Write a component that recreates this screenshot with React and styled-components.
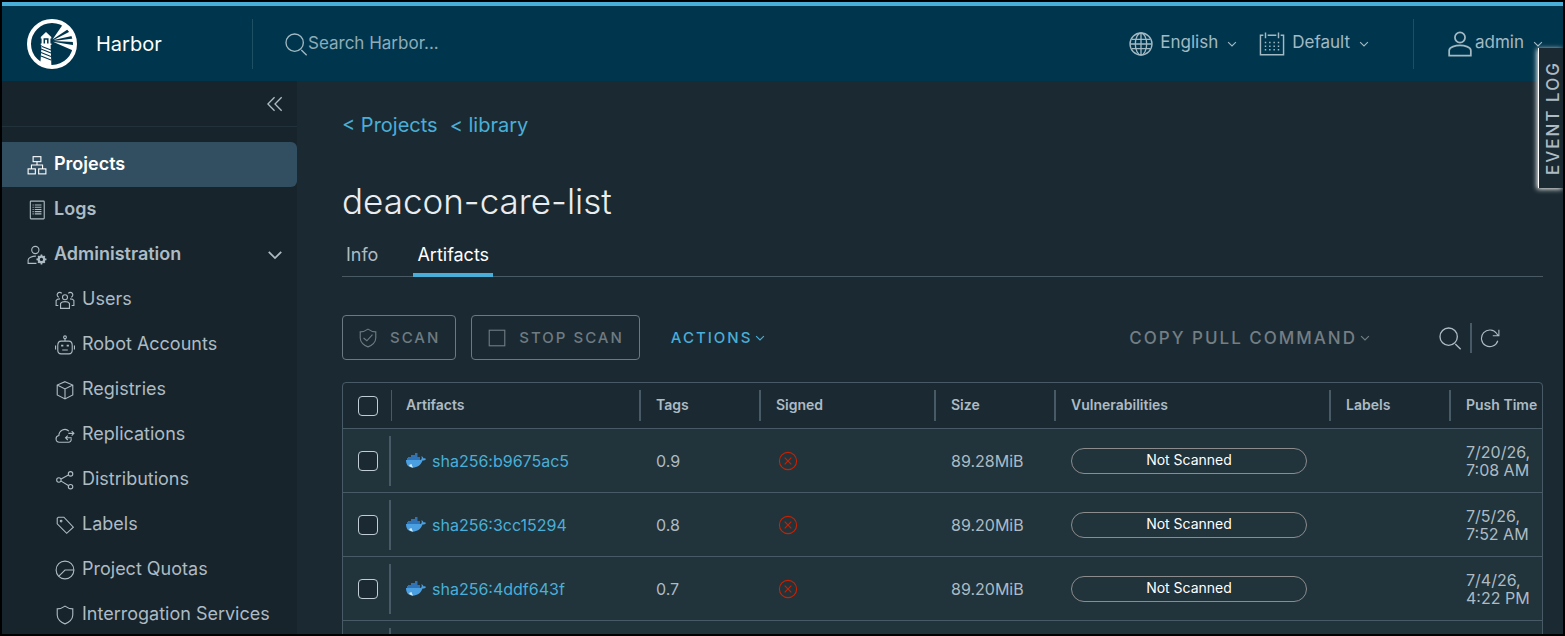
import React from 'react'
import styled, { createGlobalStyle } from 'styled-components'

// CLARITY DARK COLORS: text "#adbbc4", link "#49afd9"

const GlobalStyle = createGlobalStyle`
    * {
        box-sizing: border-box;
    }
    body {
        margin: 0;
        background: #000;
        font-family: Inter, 'Open Sans', sans-serif;
        font-size: 17px;
        color: #adbbc4;
    }
    button, input {
        font-family: inherit;
        color: inherit;
    }
    a {
        text-decoration: none;
        color: #49afd9;
    }
`;

const Shell = styled.div`
    height: 100vh;
    border: 2px solid #000;
    display: flex;
    flex-direction: column;
    overflow: hidden;
    position: relative;
    background: #1b2a32;
`;

const Header = styled.header`
    flex: none;
    height: 79px;
    border-top: 4px solid #49afd9;
    background: #00364d;
    display: flex;
    align-items: center;
    padding: 0 20px 0 25px;
    color: #a3b9c3;
`;

const Brand = styled.a`
    display: flex;
    align-items: center;
    gap: 19px;
    width: 225px;
    color: #fff;
    font-size: 20px;
`;

const HeaderDivider = styled.span`
    width: 1px;
    height: 50px;
    background: #1f4f63;
`;

const SearchBox = styled.label`
    flex: 1;
    display: flex;
    align-items: center;
    padding-left: 31px;
`;

const SearchInput = styled.input`
    flex: 1;
    min-width: 0;
    border: 0;
    padding: 0 0 2px;
    outline: none;
    background: transparent;
    font-size: 17px;
    &::placeholder {
        color: #8fabb7;
        opacity: 1;
    }
`;

const HeaderMenu = styled.button`
    display: flex;
    align-items: center;
    border: 0;
    padding: 0;
    background: transparent;
    font-size: 17px;
    cursor: pointer;
    margin-right: ${props => props.$after || '0'};
    margin-left: ${props => props.$before || '0'};
`;

const MenuText = styled.span`
    padding: 0 9px 3px ${props => (props.$near ? '2px' : '7px')};
`;

const Body = styled.div`
    flex: 1;
    min-height: 0;
    display: flex;
`;

const Sidebar = styled.nav`
    flex: none;
    width: 295px;
    background: #17242b;
    overflow: hidden;
`;

const CollapseRow = styled.div`
    height: 46px;
    margin-bottom: 15px;
    padding-right: 14px;
    border-bottom: 1px solid #21323b;
    display: flex;
    align-items: center;
    justify-content: flex-end;
`;

const IconButton = styled.button`
    display: flex;
    border: 0;
    padding: 0;
    background: transparent;
    cursor: pointer;
`;

const NavItem = styled.a`
    height: 45px;
    display: flex;
    align-items: center;
    gap: 7px;
    padding: 0 14px 0 ${props => (props.$sub ? '53px' : '25px')};
    border-radius: 0 6px 6px 0;
    font-size: 18px;
    font-weight: ${props => (props.$sub ? 400 : 600)};
    color: ${props => (props.$active ? '#fff' : '#adbbc4')};
    background: ${props => (props.$active ? '#324f62' : 'transparent')};
`;

const NavLabel = styled.span`
    flex: 1;
    padding-bottom: 3px;
    white-space: nowrap;
`;

const Main = styled.main`
    flex: 1;
    min-width: 0;
    padding: 32px 20px 0 45px;
    overflow: hidden;
`;

const Crumbs = styled.div`
    display: flex;
    gap: 12px;
    font-size: 20px;
    line-height: 24px;
`;

const Title = styled.h1`
    margin: 42px 0 0;
    font-size: 35px;
    font-weight: 300;
    line-height: 44px;
    color: #eaedf0;
`;

const Tabs = styled.div`
    display: flex;
    gap: 31px;
    margin-top: 10px;
    box-shadow: inset 0 -1px 0 #495a64;
`;

const Tab = styled.button`
    height: 44px;
    border: 0;
    border-bottom: 4px solid ${props => (props.$active ? '#49afd9' : 'transparent')};
    padding: 3px 4px 0;
    background: transparent;
    font-size: 18px;
    color: ${props => (props.$active ? '#fff' : '#adbbc4')};
    cursor: pointer;
`;

const Toolbar = styled.div`
    display: flex;
    align-items: center;
    margin: 38px 0 22px;
`;

const OutlineButton = styled.button`
    height: 45px;
    display: flex;
    align-items: center;
    gap: 12px;
    margin-right: 15px;
    padding: 0 15px 0 15px;
    border: 1px solid #6b7a82;
    border-radius: 4px;
    background: transparent;
    color: #6f7b82;
    font-size: 15px;
    font-weight: 500;
    letter-spacing: 2px;
`;

const MenuButton = styled.button`
    display: flex;
    align-items: center;
    gap: 3px;
    border: 0;
    padding: 0;
    background: transparent;
    font-weight: 500;
    letter-spacing: 2px;
    font-size: ${props => (props.$muted ? '17px' : '15px')};
    color: ${props => (props.$muted ? '#747e83' : '#49afd9')};
    margin: ${props => (props.$muted ? '0 68px 0 auto' : '0 0 0 16px')};
`;

const ToolDivider = styled.span`
    width: 2px;
    height: 30px;
    margin: 0 8px;
    background: #495a67;
`;

const ToolIcons = styled.div`
    display: flex;
    align-items: center;
    margin-right: 43px;
`;

const GridFrame = styled.div`
    border: 1px solid #495a67;
    border-radius: 4px;
    overflow: hidden;
`;

const Grid = styled.table`
    width: 100%;
    table-layout: fixed;
    border-spacing: 0;
    text-align: left;
`;

const HeadCell = styled.th`
    width: ${props => props.$width || 'auto'};
    padding: 7px 0;
    font-size: 14px;
    font-weight: 600;
`;

const Cell = styled.td`
    height: 64px;
    padding: 0;
    font-size: 16px;
    line-height: 18px;
    border-top: 1px solid #495a67;
    background: #21333b;
`;

const CellInner = styled.div`
    display: flex;
    align-items: center;
    gap: 6px;
    height: 50px;
    padding-left: 15px;
    border-left: ${props => (props.$first ? '0' : '2px')} solid ${props => (props.$line ? '#495a67' : 'transparent')};
`;

const HeadInner = styled(CellInner)`
    height: 31px;
    padding-bottom: ${props => (props.$first ? '0' : '3px')};
    ${props => props.$thin && `
        margin-left: 2px;
        padding-left: 14px;
        border-left-width: 1px;
    `}
`;

const CheckBox = styled.input`
    appearance: none;
    width: 20px;
    height: 20px;
    margin: 0;
    border: 1px solid #c1cdd4;
    border-radius: 4px;
    background: #1b2a32;
`;

const ScanBadge = styled.span`
    width: 236px;
    height: 26px;
    border: 1px solid #8c8c8c;
    border-radius: 13px;
    line-height: 21px;
    text-align: center;
    font-size: 14px;
    color: #fff;
`;

const SignedIcon = styled.span`
    display: flex;
    padding-left: 2px;
    color: #c92100;
`;

const EventLog = styled.button`
    position: absolute;
    top: 46px;
    right: 0;
    width: 25px;
    height: 140px;
    padding: 0 4px 0 0;
    border: 0;
    border-right: 1px solid #fff;
    background: #1b2a32;
    box-shadow: 1px -1px 5px #fff;
    writing-mode: vertical-rl;
    transform: rotate(180deg);
    font-size: 17px;
    font-weight: 500;
    letter-spacing: 2px;
    text-align: center;
`;

const IconSvg = styled.svg`
    flex: none;
`;

const Icon = ({ size = 20, stroke = 2, children }) => (
    <IconSvg width={size} height={size} viewBox="0 0 36 36" fill="none" stroke="currentColor" strokeWidth={stroke} aria-hidden="true">
        {children}
    </IconSvg>
)

const Chevron = ({ size = 10, stroke = 4 }) => (
    <Icon size={size} stroke={stroke}><path d="M4 11 L18 25 L32 11" /></Icon>
)

const Logo = () => (
    <svg width="50" height="50" viewBox="0 0 50 50" aria-hidden="true">
        <circle cx="25" cy="25" r="23" fill="none" stroke="#fff" strokeWidth="4" />
        <g fill="#fff">
            <path d="M19 13 L24.3 18 V19.4 H23.4 V24.6 H24.4 V26 H13.8 V24.6 H14.6 V19.4 H13.8 V18 Z" />
            <path d="M14.6 26 H23.6 L24.4 47 L13.4 44 Z" />
            <path d="M25.5 20.4 L35.5 6 L42 9.5 Z" />
            <path d="M26.5 21 L43 12.4 L46 16.8 Z" />
            <path d="M26.5 22 L46.6 19.6 L46.6 23 Z" />
            <path d="M26 22.8 L47 26.2 L46 31.6 Z" />
        </g>
        <path d="M17.3 24.4 V20 H20.8 V24.4" fill="none" stroke="#00364d" strokeWidth="1.5" />
        <path d="M14 30 L24 34 M14 33.5 L24 37.5 M14 37 L24 41 M15 27.6 L24 31" stroke="#00364d" strokeWidth="1.1" />
    </svg>
)

const SearchIcon = () => (
    <Icon size={24}><circle cx="16" cy="16" r="13" /><path d="M26 27 L34 35" /></Icon>
)

const GlobeIcon = () => (
    <Icon size={24}>
        <circle cx="18" cy="18" r="16.5" />
        <ellipse cx="18" cy="18" rx="8.5" ry="16.5" />
        <path d="M18 1.5 V34.5 M1.5 18 H34.5 M4 11 H32 M4 25 H32" />
    </Icon>
)

const CalendarIcon = () => (
    <Icon size={26}>
        <path d="M6 6 H2 V33 H34 V6 H30 M12 6 H24 M9 2 V10 M27 2 V10" />
        <path d="M8 16 H29 M8 21 H29 M8 26 H29" strokeDasharray="2 4" />
    </Icon>
)

const UserIcon = () => (
    <Icon size={26} stroke={2.4}>
        <circle cx="18" cy="9" r="7" />
        <path d="M3 34 V27 C3 22 12 20 18 20 S33 22 33 27 V34 Z" />
    </Icon>
)

const icons = {
    projects: <><rect x="11" y="3" width="14" height="9" /><rect x="2" y="25" width="13" height="9" /><rect x="21" y="25" width="13" height="9" /><path d="M18 12 V18 M8 25 V18 H28 V25" /></>,
    logs: <><rect x="6" y="2" width="25" height="32" rx="1" /><path d="M14 9 H26 M14 13 H26 M14 17 H26 M14 21 H26 M14 25 H26 M10 9 H12 M10 13 H12 M10 17 H12 M10 21 H12 M10 25 H12" /></>,
    admin: <><circle cx="15" cy="9" r="6.5" /><path d="M17 33 H2 V27 C2 23 9 20 16 20" /><circle cx="26" cy="26" r="5" strokeWidth="4" /><path d="M26 17 V20 M26 32 V35 M17 26 H20 M32 26 H35 M20 20 L22 22 M30 30 L32 32 M32 20 L30 22 M20 32 L22 30" strokeWidth="3" /></>,
    users: <><circle cx="18" cy="13" r="4.5" /><path d="M10 33 V24 C13 20 23 20 26 24 V33 Z M7 13 A4.5 4.5 0 1 1 12 6 M29 13 A4.5 4.5 0 1 0 24 6 M6 28 H2 V19 C3 17 6 16 9 16 M30 28 H34 V19 C33 17 30 16 27 16" /></>,
    robot: <><circle cx="18" cy="4" r="2.5" /><path d="M18 7 V11 M11 11 H25 C30 11 31 15 31 19 V27 C31 31 29 34 25 34 H11 C7 34 5 31 5 27 V19 C5 15 6 11 11 11 Z M13 27 H23 M1 19 V26 M35 19 V26" /><path d="M11 19 H15 M21 19 H25" strokeWidth="3" /></>,
    registries: <path d="M18 3 L32 9 V27 L18 34 L4 27 V9 Z M4 9 L18 16 L32 9 M18 16 V34" />,
    replications: <><path d="M29 24 C30 29 27 31 24 31 H8 C0 31 0 20 7 19 C7 10 18 4 25 11" /><path d="M24 15 H34 M30 11 L34 15 L30 19 M30 23 H19 M23 19 L19 23 L23 27" /></>,
    distributions: <><circle cx="7" cy="18" r="4" /><circle cx="28" cy="7" r="4" /><circle cx="28" cy="30" r="4" /><path d="M11 16 L24 9 M11 20 L24 28" /></>,
    labels: <><path d="M4 6 V16 L21 33 L33 22 L16 4 H6 Z" /><circle cx="11" cy="11" r="1.5" /></>,
    quotas: <><circle cx="18" cy="18" r="16" /><path d="M34 18 H18 L7 29" /></>,
    shield: <path d="M18 2 C22 5 27 7 32 7 V18 C32 26 25 32 18 34 C11 32 4 26 4 18 V7 C9 7 14 5 18 2 Z" />,
}

const DockerIcon = () => (
    <IconSvg width="20" height="15" viewBox="0 0 40 30" aria-hidden="true">
        <path d="M4 8 H10 V4 H18 V0 H23 V8 H28 V14 H2 V10 H4 Z" fill="#2f72b5" />
        <path d="M0 14 H28 C31 14 32 12 31 6 C34 8 35 10 35 11 C37 10 39 11 40 12 C39 15 36 15 33 15 C30 24 23 29 13 29 C4 29 0 23 0 14 Z" fill="#4a9fe0" />
        <path d="M6 24 C8 28 11 29 15 29 C12 27 12 25 11 22 Z" fill="#dcebf5" />
    </IconSvg>
)

const navItems = [
    { name: 'Projects', icon: 'projects', active: true },
    { name: 'Logs', icon: 'logs' },
    { name: 'Administration', icon: 'admin', open: true },
    { name: 'Users', icon: 'users', sub: true },
    { name: 'Robot Accounts', icon: 'robot', sub: true },
    { name: 'Registries', icon: 'registries', sub: true },
    { name: 'Replications', icon: 'replications', sub: true },
    { name: 'Distributions', icon: 'distributions', sub: true },
    { name: 'Labels', icon: 'labels', sub: true },
    { name: 'Project Quotas', icon: 'quotas', sub: true },
    { name: 'Interrogation Services', icon: 'shield', sub: true },
]

const columns = [
    { name: 'Artifacts', thin: true },
    { name: 'Tags', width: '120px' },
    { name: 'Signed', width: '175px' },
    { name: 'Size', width: '120px' },
    { name: 'Vulnerabilities', width: '275px' },
    { name: 'Labels', width: '120px' },
    { name: 'Push Time', width: '93px' },
]

const artifacts = [
    { digest: 'sha256:b9675ac5', tag: '0.9', size: '89.28MiB', date: '7/20/26,', time: '7:08 AM' },
    { digest: 'sha256:3cc15294', tag: '0.8', size: '89.20MiB', date: '7/5/26,', time: '7:52 AM' },
    { digest: 'sha256:4ddf643f', tag: '0.7', size: '89.20MiB', date: '7/4/26,', time: '4:22 PM' },
]

const ArtifactRow = ({ item }) => (
    <tr>
        <Cell><CellInner $first><CheckBox type="checkbox" aria-label={`Select ${item.digest}`} /></CellInner></Cell>
        <Cell><CellInner $line><DockerIcon /><a href="#artifact">{item.digest}</a></CellInner></Cell>
        <Cell><CellInner>{item.tag}</CellInner></Cell>
        <Cell>
            <CellInner>
                <SignedIcon>
                    <Icon><circle cx="18" cy="18" r="15.5" /><path d="M12 12 L24 24 M24 12 L12 24" /></Icon>
                </SignedIcon>
            </CellInner>
        </Cell>
        <Cell><CellInner>{item.size}</CellInner></Cell>
        <Cell><CellInner><ScanBadge>Not Scanned</ScanBadge></CellInner></Cell>
        <Cell />
        <Cell><CellInner>{item.date}<br />{item.time}</CellInner></Cell>
    </tr>
)

const EmptyRow = () => (
    <tr>
        <Cell />
        <Cell><CellInner $line /></Cell>
        <Cell colSpan={6} />
    </tr>
)

const App = () => {
    return (
        <Shell>
            <GlobalStyle />
            <Header>
                <Brand href="#home"><Logo />Harbor</Brand>
                <HeaderDivider />
                <SearchBox>
                    <SearchIcon />
                    <SearchInput type="text" placeholder="Search Harbor..." aria-label="Search Harbor" />
                </SearchBox>
                <HeaderMenu $after="22px"><GlobeIcon /><MenuText>English</MenuText><Chevron /></HeaderMenu>
                <HeaderMenu $after="44px"><CalendarIcon /><MenuText>Default</MenuText><Chevron /></HeaderMenu>
                <HeaderDivider />
                <HeaderMenu $before="33px"><UserIcon /><MenuText $near>admin</MenuText><Chevron /></HeaderMenu>
            </Header>
            <Body>
                <Sidebar>
                    <CollapseRow>
                        <IconButton aria-label="Collapse menu">
                            <Icon size={16} stroke={3}><path d="M17 3 L2 18 L17 33 M33 3 L18 18 L33 33" /></Icon>
                        </IconButton>
                    </CollapseRow>
                    {navItems.map(item => (
                        <NavItem key={item.name} href="#nav" $sub={item.sub} $active={item.active}>
                            <Icon>{icons[item.icon]}</Icon>
                            <NavLabel>{item.name}</NavLabel>
                            {item.open && <Chevron size={16} />}
                        </NavItem>
                    ))}
                </Sidebar>
                <Main>
                    <Crumbs>
                        <a href="#projects">&lt; Projects</a>
                        <a href="#library">&lt; library</a>
                    </Crumbs>
                    <Title>deacon-care-list</Title>
                    <Tabs>
                        <Tab>Info</Tab>
                        <Tab $active>Artifacts</Tab>
                    </Tabs>
                    <Toolbar>
                        <OutlineButton disabled>
                            <Icon>{icons.shield}<path d="M10 18 L16 23 L26 12" /></Icon>SCAN
                        </OutlineButton>
                        <OutlineButton disabled>
                            <Icon><rect x="4" y="4" width="28" height="28" /></Icon>STOP SCAN
                        </OutlineButton>
                        <MenuButton>ACTIONS<Chevron /></MenuButton>
                        <MenuButton $muted>COPY PULL COMMAND<Chevron /></MenuButton>
                        <ToolIcons>
                            <IconButton aria-label="Filter artifacts"><SearchIcon /></IconButton>
                            <ToolDivider />
                            <IconButton aria-label="Refresh">
                                <Icon><path d="M32 23 A15 15 0 1 1 30 10 L33 14 M34 3 V14 H23" /></Icon>
                            </IconButton>
                        </ToolIcons>
                    </Toolbar>
                    <GridFrame>
                        <Grid>
                            <thead>
                                <tr>
                                    <HeadCell $width="46px">
                                        <HeadInner $first><CheckBox type="checkbox" aria-label="Select all" /></HeadInner>
                                    </HeadCell>
                                    {columns.map(col => (
                                        <HeadCell key={col.name} $width={col.width}>
                                            <HeadInner $line $thin={col.thin}>{col.name}</HeadInner>
                                        </HeadCell>
                                    ))}
                                </tr>
                            </thead>
                            <tbody>
                                {artifacts.map(item => <ArtifactRow key={item.digest} item={item} />)}
                                <EmptyRow />
                            </tbody>
                        </Grid>
                    </GridFrame>
                </Main>
            </Body>
            <EventLog>EVENT LOG</EventLog>
        </Shell>
    )
}

export default App
